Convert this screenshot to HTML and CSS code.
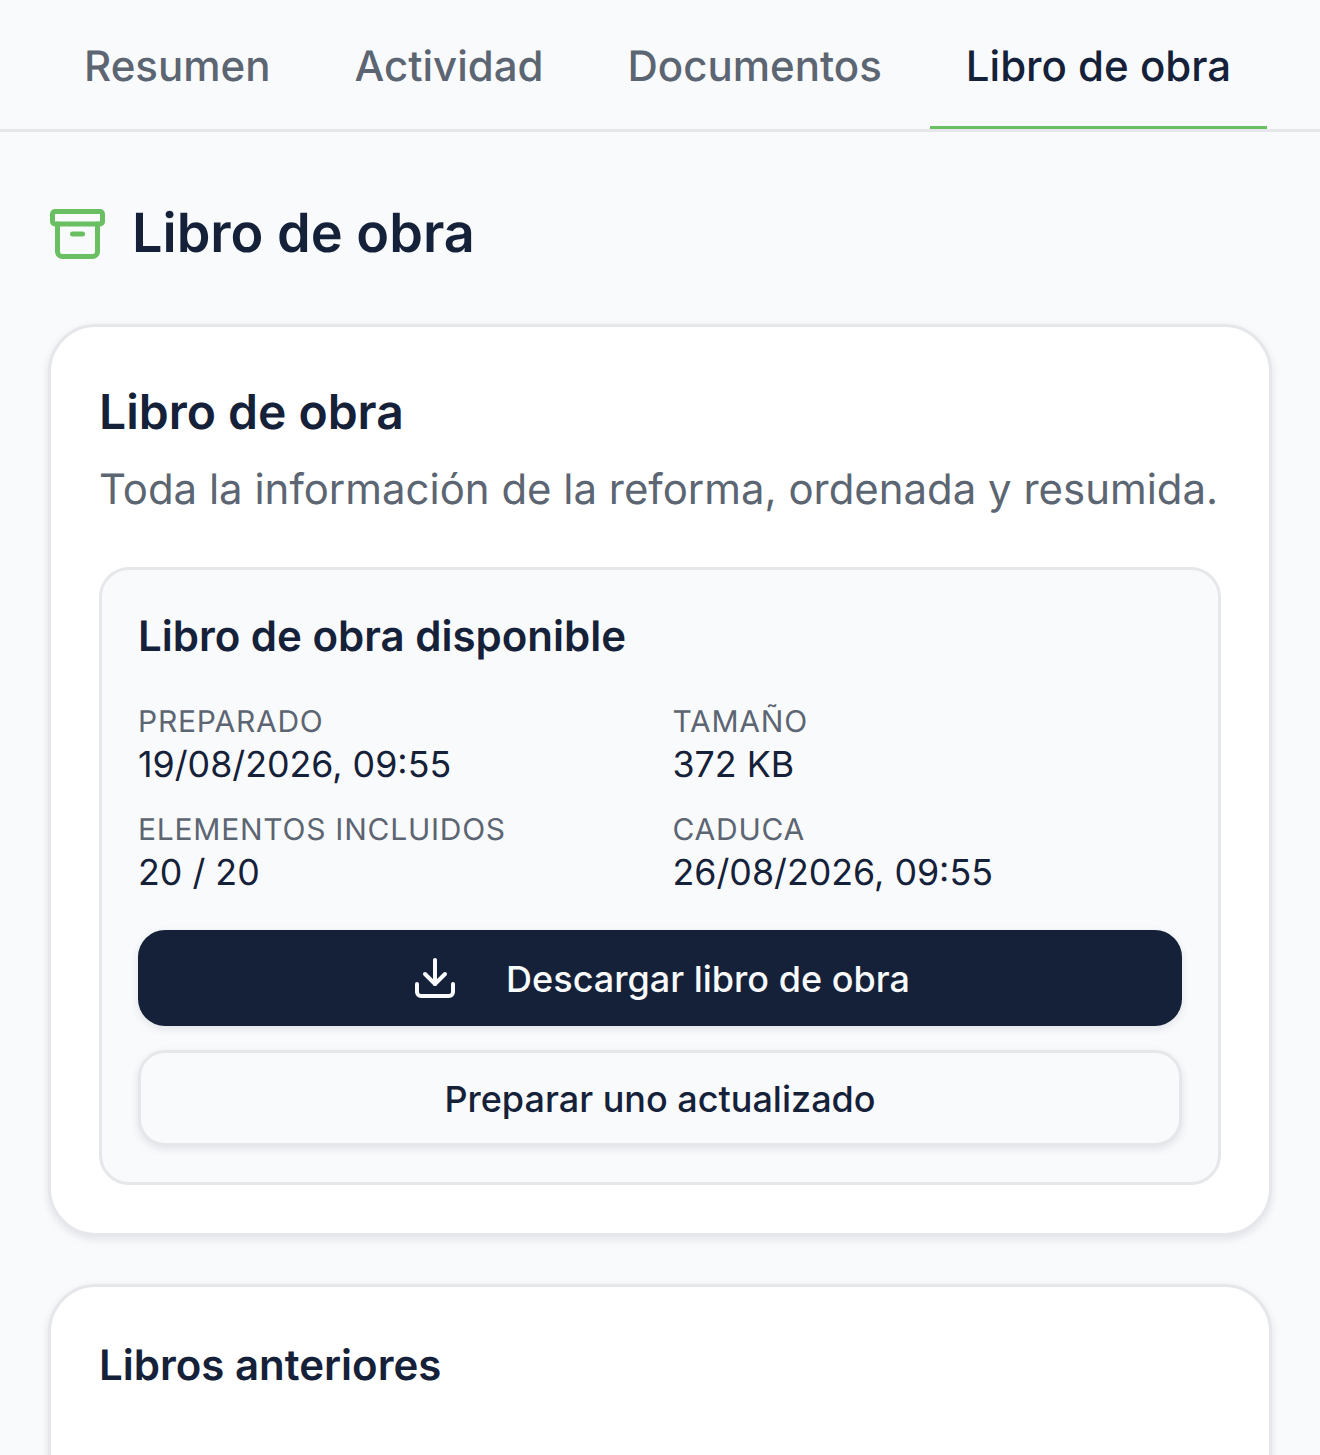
FILE: index.html
```html
<!DOCTYPE html>
<html lang="es">
<head>
    <meta charset="UTF-8">
    <meta name="viewport" content="width=device-width, initial-scale=1.0">
    <title>Libro de obra</title>
    <link rel="stylesheet" href="styles.css">
</head>
<body>

<nav class="tabs">
    <a class="tab">Resumen</a>
    <a class="tab">Actividad</a>
    <a class="tab">Documentos</a>
    <a class="tab active">Libro de obra</a>
</nav>

<main class="content">
    <div class="page-title">
        <svg class="title-icon" viewBox="1 2 22 20" fill="none" stroke="currentColor" stroke-width="2" stroke-linecap="round" stroke-linejoin="round">
            <rect x="2" y="3" width="20" height="5" rx="1"></rect>
            <path d="M4 8v11a2 2 0 0 0 2 2h12a2 2 0 0 0 2-2V8"></path>
            <path d="M10 12h4"></path>
        </svg>
        <h1>Libro de obra</h1>
    </div>

    <section class="card">
        <h2>Libro de obra</h2>
        <p class="subtitle">Toda la información de la reforma, ordenada y resumida.</p>

        <div class="panel">
            <h3>Libro de obra disponible</h3>
            <div class="details">
                <div>
                    <div class="label">PREPARADO</div>
                    <div class="value">19/08/2026, 09:55</div>
                </div>
                <div>
                    <div class="label">TAMAÑO</div>
                    <div class="value">372 KB</div>
                </div>
                <div>
                    <div class="label">ELEMENTOS INCLUIDOS</div>
                    <div class="value">20 / 20</div>
                </div>
                <div>
                    <div class="label">CADUCA</div>
                    <div class="value">26/08/2026, 09:55</div>
                </div>
            </div>
            <button class="btn btn-dark">
                <svg class="btn-icon" viewBox="0 0 24 24" fill="none" stroke="currentColor" stroke-width="2" stroke-linecap="round" stroke-linejoin="round">
                    <path d="M21 15v4a2 2 0 0 1-2 2H5a2 2 0 0 1-2-2v-4"></path>
                    <path d="M7 10l5 5 5-5"></path>
                    <path d="M12 15V3"></path>
                </svg>
                Descargar libro de obra
            </button>
            <button class="btn btn-light">Preparar uno actualizado</button>
        </div>
    </section>

    <section class="card card-past">
        <h2 class="small">Libros anteriores</h2>
    </section>
</main>

</body>
</html>
```

FILE: styles.css
```css
html, body {
    margin: 0;
    padding: 0;
}
body {
    height: 1455px;
    overflow: hidden;
    background-color: #f9fafc;
    color: #152139;
    font-family: Inter, "Liberation Sans", sans-serif;
    text-rendering: geometricPrecision;
}
h1, h2, h3, p {
    margin: 0;
}

/* tabs */
.tabs {
    display: flex;
    gap: 12px;
    height: 129px;
    padding: 0 48px;
    border-bottom: 3px solid #e5e7eb;
}
.tab {
    height: 129px;
    box-sizing: border-box;
    padding: 41px 36px 0;
    font-size: 42px;
    line-height: 52px;
    font-weight: 500;
    color: #5c6572;
    white-space: nowrap;
}
.tab.active {
    color: #152139;
    border-bottom: 3px solid #6abf63;
}

/* page */
.content {
    padding: 0 48px;
}
.page-title {
    display: flex;
    align-items: center;
    gap: 27px;
    height: 192px;
    padding-top: 12px;
    box-sizing: border-box;
}
.title-icon {
    width: 55px;
    height: 50px;
    margin-left: 2px;
    color: #6abf63;
}
h1 {
    font-size: 54px;
    line-height: 60px;
    font-weight: 600;
}

/* cards */
.card {
    padding: 48px;
    margin-bottom: 48px;
    background-color: #fff;
    border: 3px solid #e5e7eb;
    border-radius: 48px;
    box-shadow: 0 3px 9px rgba(17, 24, 39, 0.1);
}
.card-past {
    min-height: 300px;
}
h2 {
    font-size: 48px;
    line-height: 74px;
    font-weight: 600;
}
h2.small {
    font-size: 42px;
    line-height: 62px;
}
.subtitle {
    margin-top: 11px;
    font-size: 41.95px;
    line-height: 60px;
    color: #5c6572;
    white-space: nowrap;
}
.panel {
    margin-top: 47px;
    padding: 36px;
    background-color: #f9fafc;
    border: 3px solid #e5e7eb;
    border-radius: 30px;
}
h3 {
    font-size: 42px;
    line-height: 62px;
    font-weight: 600;
}
.details {
    display: grid;
    grid-template-columns: 1fr 1fr;
    gap: 0 25px;
    margin-top: 32px;
}
.details > div {
    height: 108px;
}
.label {
    font-size: 30px;
    line-height: 44px;
    letter-spacing: 0.75px;
    color: #5c6572;
}
.value {
    margin-top: -2px;
    font-size: 35.75px;
    line-height: 44px;
}

/* buttons */
.btn {
    display: flex;
    align-items: center;
    justify-content: center;
    width: 100%;
    height: 96px;
    padding-top: 2px;
    font-family: inherit;
    font-size: 36px;
    font-weight: 500;
    border-radius: 27px;
}
.btn-dark {
    gap: 47px;
    margin-top: 14px;
    color: #f9fafc;
    background-color: #152139;
    border: none;
    box-shadow: 0 3px 9px rgba(17, 24, 39, 0.1);
}
.btn-icon {
    width: 48px;
    height: 48px;
    margin: -2px 0 0 1px;
}
.btn-light {
    margin-top: 24px;
    color: #152139;
    background-color: #f9fafc;
    border: 3px solid #e5e7eb;
    box-shadow: 0 3px 9px rgba(17, 24, 39, 0.1);
}
```
